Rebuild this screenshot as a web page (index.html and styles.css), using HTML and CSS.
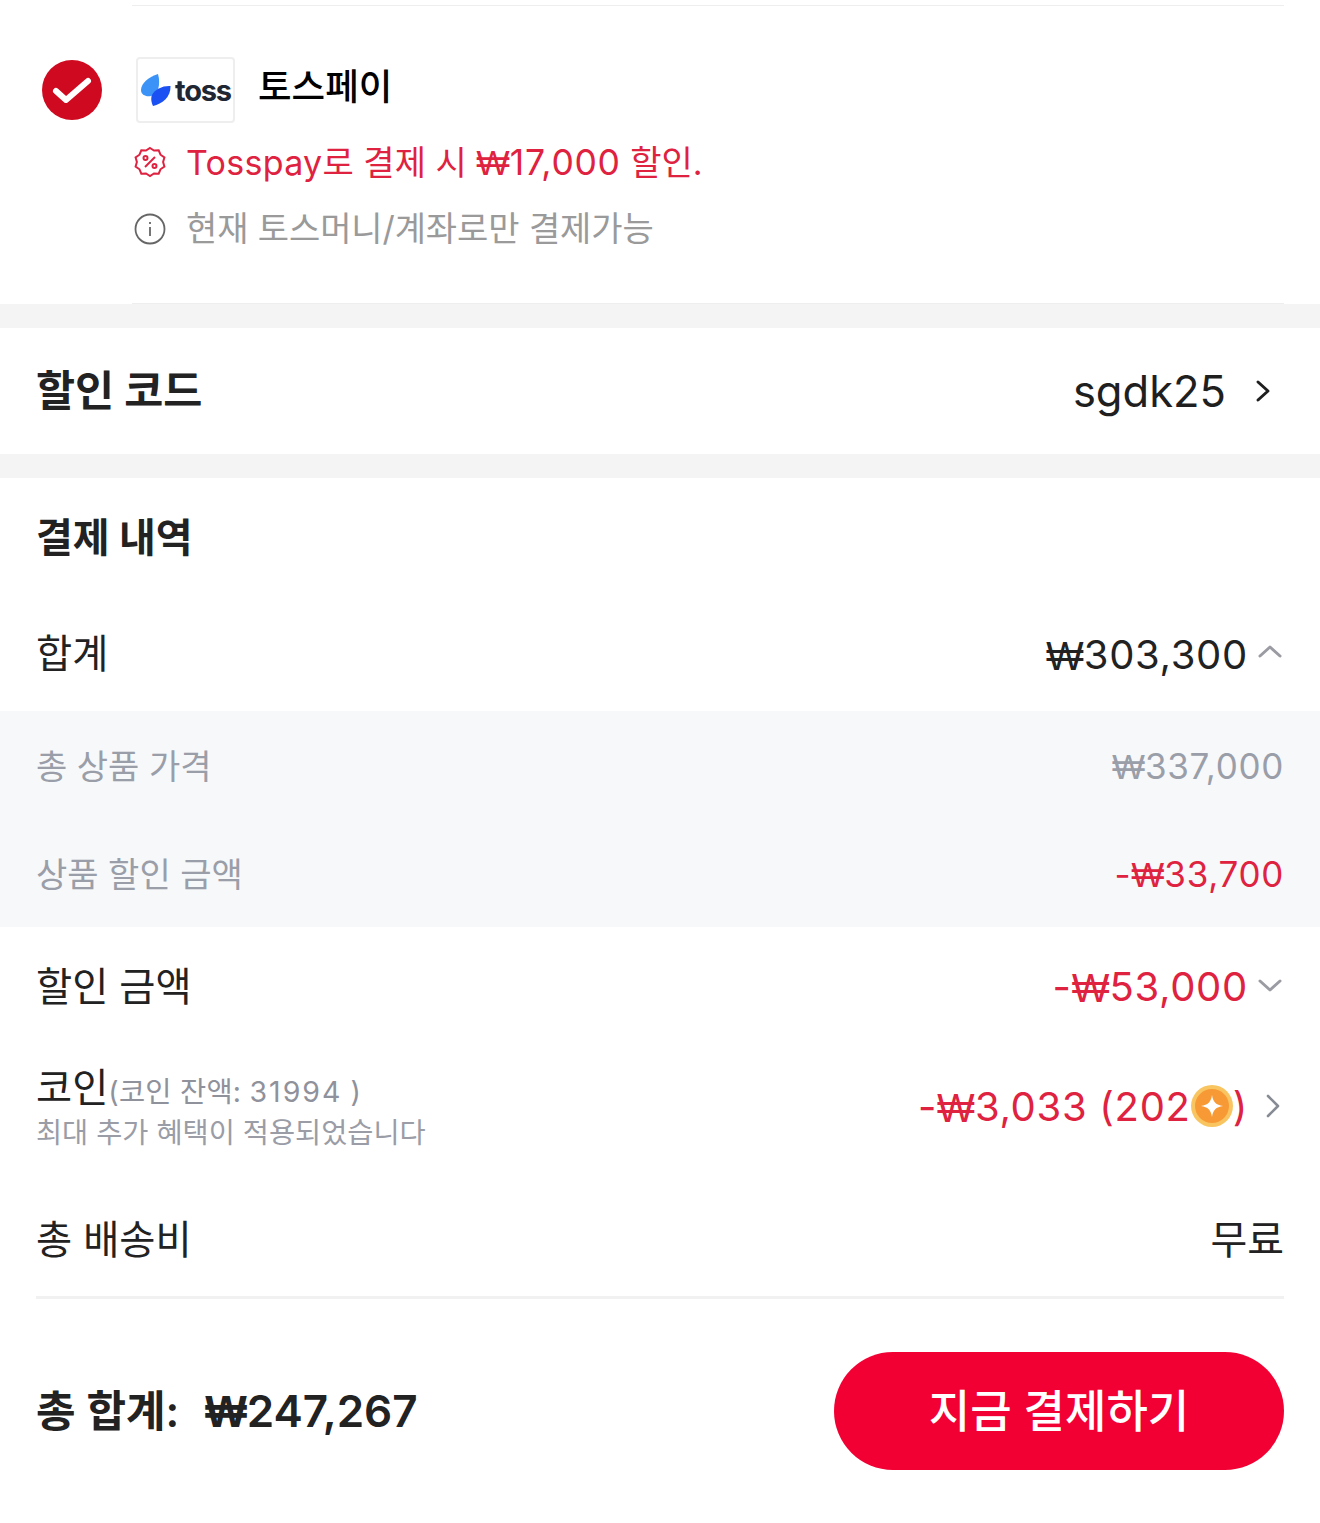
FILE: index.html
```html
<!DOCTYPE html>
<html lang="ko">
<head>
<meta charset="utf-8">
<title>결제</title>
<link rel="stylesheet" href="styles.css">
</head>
<body>
<div class="page">
  <section class="pay">
    <div class="rule"></div>
    <div class="pay-body">
      <svg class="check" viewBox="0 0 60 60"><circle cx="30" cy="30" r="30" fill="#cf0a20"/><path d="M14 31l10 9 22-19" fill="none" stroke="#fff" stroke-width="6" stroke-linecap="round" stroke-linejoin="round"/></svg>
      <div class="pay-info">
        <div class="pay-head">
          <div class="logo">
            <svg class="logo-mark" viewBox="0 0 30 32"><path d="M17 0C8 3 0 9 0 16c0 5 5 7 10 6C17 20 20 11 17 0z" fill="#3b93f7"/><path d="M29.500 12C22 11.500 14 15 11 21c-1.500 3.500-.5 8 1 11 9-2 18-9 17.500-20z" fill="#1b50f2"/></svg>
            <span class="logo-text">toss</span>
          </div>
          <span class="pay-name">토스페이</span>
        </div>
        <div class="note note-red">
          <svg class="note-icon" viewBox="0 0 32 32" fill="none" stroke="#de2240" stroke-width="2"><path d="M16 2l4 2.600 4.700-.3 1.800 4.400 3.900 2.700-1.300 4.600 1.300 4.600-3.900 2.700-1.800 4.400-4.700-.3L16 30l-4-2.600-4.700.3-1.800-4.400-3.900-2.700L2.900 16l-1.300-4.600 3.900-2.700 1.800-4.400 4.700.3z"/><path d="M11 21l10-10"/><circle cx="11.500" cy="12" r="2"/><circle cx="20.500" cy="20" r="2"/></svg>
          <span><span class="latin">Tosspay</span>로 결제 시 <span class="num"><span class="won">₩</span>17,000</span> 할인.</span>
        </div>
        <div class="note note-grey">
          <svg class="note-icon" viewBox="0 0 32 32" fill="none" stroke="#666" stroke-width="1.800"><circle cx="16" cy="16" r="14.500"/><path d="M16 14v9M16 9v2"/></svg>
          <span>현재 토스머니/계좌로만 결제가능</span>
        </div>
      </div>
    </div>
    <div class="rule"></div>
  </section>

  <section class="code">
    <h2 class="title code-title">할인 코드</h2>
    <div class="code-value">
      <span>sgdk25</span>
      <svg class="chev-code" viewBox="0 0 16 24" fill="none" stroke="#1f1f1f" stroke-width="3" stroke-linecap="round" stroke-linejoin="round"><path d="M3 3l10 9-10 9"/></svg>
    </div>
  </section>

  <section class="summary">
    <h2 class="title summary-title">결제 내역</h2>
    <div class="row row-total">
      <span class="label">합계</span>
      <span class="value num"><span class="won">₩</span>303,300<svg class="chev chev-up" viewBox="0 0 24 14" fill="none" stroke="#9b9ba3" stroke-width="3" stroke-linecap="round" stroke-linejoin="round"><path d="M2 12L12 3l10 9"/></svg></span>
    </div>
    <div class="detail">
      <div class="detail-row"><span>총 상품 가격</span><span class="num"><span class="won">₩</span>337,000</span></div>
      <div class="detail-row"><span>상품 할인 금액</span><span class="num red">-<span class="won">₩</span>33,700</span></div>
    </div>
    <div class="row row-discount">
      <span class="label">할인 금액</span>
      <span class="value num red">-<span class="won">₩</span>53,000<svg class="chev" viewBox="0 0 24 14" fill="none" stroke="#9b9ba3" stroke-width="3" stroke-linecap="round" stroke-linejoin="round"><path d="M2 2l10 9 10-9"/></svg></span>
    </div>
    <div class="row row-coin">
      <div>
        <div class="coin-head"><span class="label">코인</span><span class="coin-bal">(코인 잔액: <span class="num">31994</span> )</span></div>
        <div class="coin-sub">최대 추가 혜택이 적용되었습니다</div>
      </div>
      <span class="value num red">-<span class="won">₩</span>3,033 (202<svg class="coin" viewBox="0 0 42 42"><circle cx="21" cy="21" r="21" fill="#f8c561"/><circle cx="21" cy="21" r="17" fill="#f79a36"/><path d="M21 10c1 7 4 10 11 11-7 1-10 4-11 11-1-7-4-10-11-11 7-1 10-4 11-11z" fill="#fff"/></svg>)<svg class="chev-right" viewBox="0 0 16 24" fill="none" stroke="#878b94" stroke-width="2.600" stroke-linecap="round" stroke-linejoin="round"><path d="M3 2l10 10-10 10"/></svg></span>
    </div>
    <div class="row row-ship">
      <span class="label">총 배송비</span>
      <span class="value">무료</span>
    </div>
    <div class="foot">
      <div class="grand"><span>총 합계:</span><span class="grand-num"><span class="won">₩</span>247,267</span></div>
      <button class="buy" type="button">지금 결제하기</button>
    </div>
  </section>
</div>
</body>
</html>
```
FILE: styles.css
```css
* { box-sizing: border-box; }
html, body { margin: 0; padding: 0; background: #fff; }
body {
  font-family: Inter, "Noto Sans CJK KR", "Noto Sans", sans-serif;
  color: #1f1f1f;
}
.page { width: 1320px; height: 1523px; background: #f4f4f4; overflow: hidden; }

.pay { padding-top: 5px; height: 304px; display: flex; flex-direction: column; background: #fff; }
.rule { height: 1px; background: #eeeeee; margin-left: 132px; margin-right: 36px; flex: none; }
.pay-body { flex: 1; display: flex; padding-left: 42px; padding-top: 51px; }
.check { width: 60px; height: 60px; flex: none; margin-top: 3px; }
.pay-info { margin-left: 32px; }
.pay-head { display: flex; align-items: center; margin-left: 2px; height: 66px; }
.logo {
  width: 99px; height: 66px; border: 2px solid #eeeeee; border-radius: 4px;
  display: flex; align-items: center; padding-left: 3px; gap: 4px;
}
.logo-mark { width: 30px; height: 32px; flex: none; }
.logo-text { font-size: 29px; font-weight: 700; color: #202632; letter-spacing: -1.200px; line-height: 30px; padding-top: 1px; }
.pay-name { margin-left: 23px; font-size: 36.500px; font-weight: 500; color: #000; position: relative; top: -6px; }
.note { display: flex; align-items: center; font-size: 34px; line-height: 50px; }
.note-icon { width: 32px; height: 32px; flex: none; margin-right: 20px; }
.note-red { color: #de2240; margin-top: 13px; }
.note-grey { color: #9a9a9a; margin-top: 16px; letter-spacing: -0.1px; }
.note .num { font-size: 35.500px; }
.latin { letter-spacing: 0.3px; }

.num { letter-spacing: 0.7px; }
.won { font-family: "Open Sans", sans-serif; letter-spacing: 0; }

.code {
  margin-top: 24px; height: 126px; padding: 0 49px 0 36px; background: #fff;
  display: flex; justify-content: space-between; align-items: center;
}
.title { margin: 0; font-size: 40px; font-weight: 700; color: #222; }
.code-title { font-size: 42.500px; position: relative; top: -4px; }
.code-value { display: flex; align-items: center; font-size: 43.500px; gap: 29px; }
.chev-code { width: 16px; height: 26px; }

.summary { margin-top: 24px; background: #fff; height: 1045px; }
.summary-title { padding: 34px 36px 0; line-height: 52px; }
.row { display: flex; justify-content: space-between; align-items: center; padding: 0 36px; }
.label { font-size: 39.300px; color: #222; }
.value { display: inline-flex; align-items: center; font-size: 40px; color: #222; }
.chev { width: 24px; height: 14px; margin-left: 10px; margin-right: 2px; }
.chev-up { margin-bottom: 6px; }
.red { color: #de2240; }
.row-total { height: 116px; margin-top: 31px; }
.row-total > .label, .row-discount > .label { margin-bottom: 6px; }
.row-total > .value { margin-top: 2px; }
.detail { background: #f7f8fa; height: 216px; color: #9a9ea8; font-size: 34px; padding: 0 36px; }
.detail-row { height: 108px; padding-bottom: 2px; display: flex; justify-content: space-between; align-items: center; }
.detail .num { font-size: 35px; margin-top: 2px; }
.row-discount { height: 118px; }
.row-coin { height: 122px; }
.coin-head { display: flex; align-items: baseline; line-height: 50px; }
.coin-bal { font-size: 28.500px; color: #8f919b; letter-spacing: 0.2px; }
.coin-bal .num { letter-spacing: 2px; }
.coin-sub { font-size: 28.400px; color: #9a9ca6; line-height: 32px; }
.coin { width: 42px; height: 42px; }
.chev-right { width: 16px; height: 24px; margin-left: 17px; margin-right: 3px; }
.row-ship { height: 132px; margin: 0 36px; padding: 10px 0 0; border-bottom: 3px solid #f1f1f1; }
.foot { display: flex; justify-content: space-between; align-items: center; padding: 53px 36px 0; }
.grand { display: flex; align-items: baseline; gap: 26px; font-size: 43px; font-weight: 600; color: #222; margin-bottom: 6px; }
.grand-num { font-size: 44px; }
.buy {
  width: 450px; height: 118px; border: 0; border-radius: 59px; background: #f20033; color: #fff;
  padding: 0 0 5px;
  font: 500 45px Inter, "Noto Sans CJK KR", sans-serif;
}
```
